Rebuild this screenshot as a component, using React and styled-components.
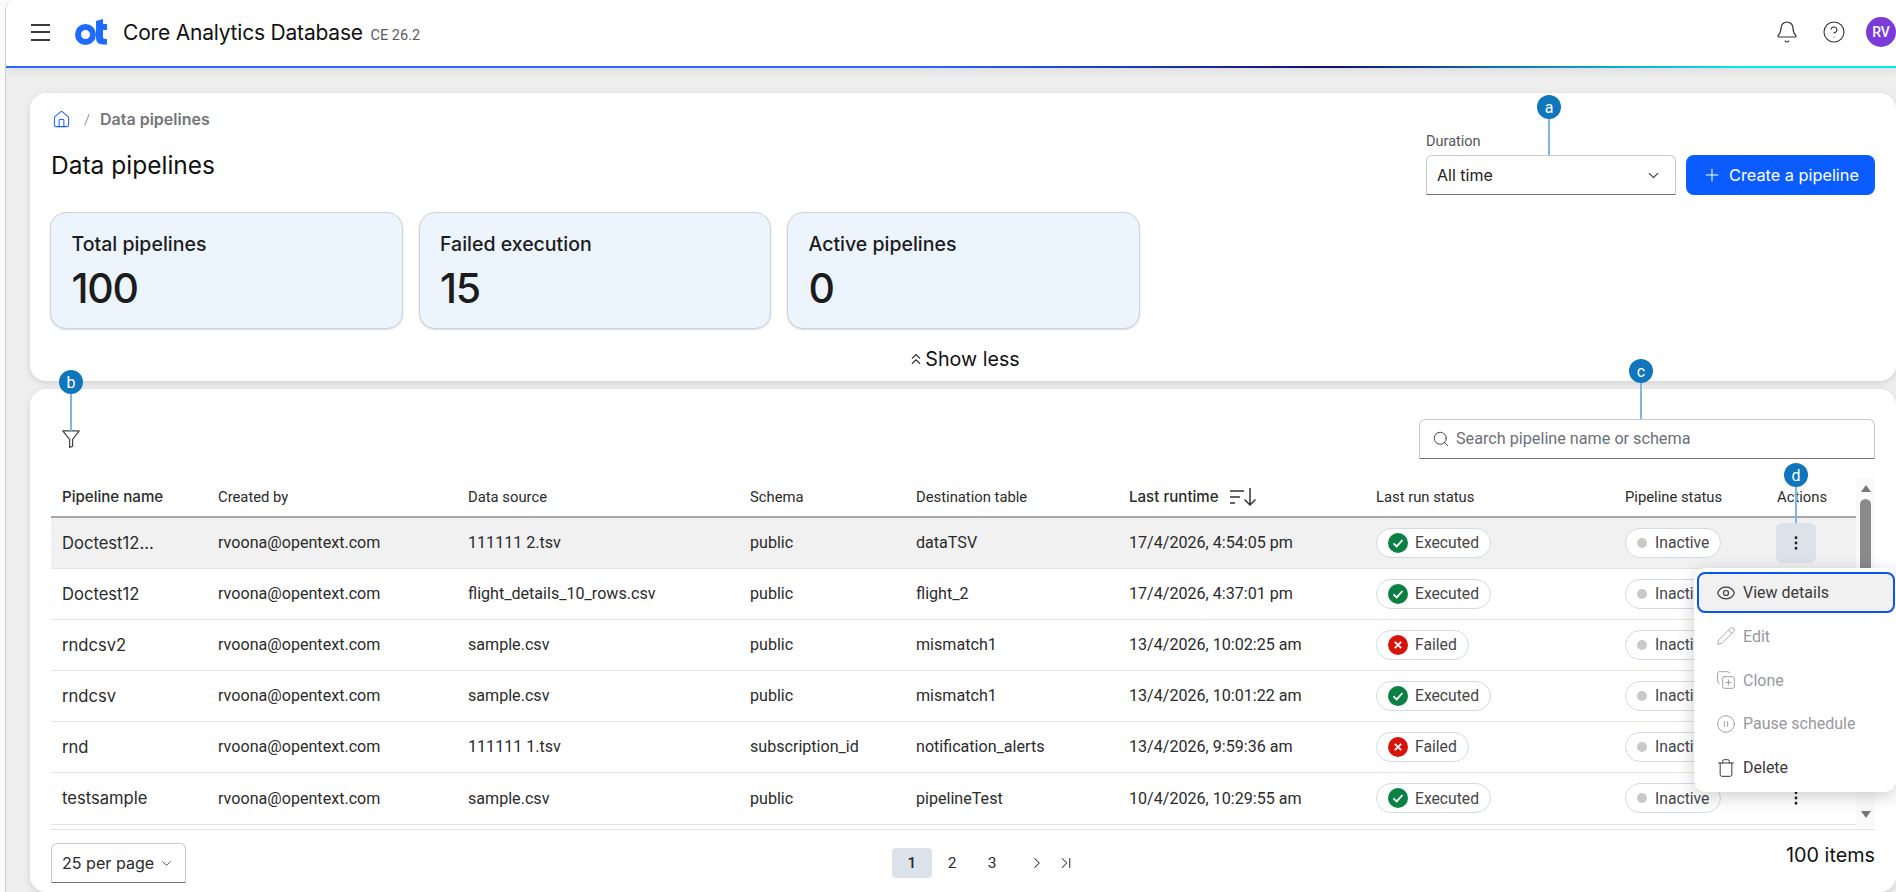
import styled, { createGlobalStyle } from 'styled-components';
import {
  Bell,
  ChevronDown,
  ChevronLast,
  ChevronRight,
  ChevronsUp,
  CircleHelp,
  CirclePause,
  CopyPlus,
  EllipsisVertical,
  Eye,
  House,
  Pencil,
  Plus,
  Search,
  Trash,
} from 'lucide-react';

const rows = [
  { name: 'Doctest12...', source: '111111 2.tsv', schema: 'public', table: 'dataTSV', time: '17/4/2026, 4:54:05 pm', ok: true },
  { name: 'Doctest12', source: 'flight_details_10_rows.csv', schema: 'public', table: 'flight_2', time: '17/4/2026, 4:37:01 pm', ok: true },
  { name: 'rndcsv2', source: 'sample.csv', schema: 'public', table: 'mismatch1', time: '13/4/2026, 10:02:25 am', ok: false },
  { name: 'rndcsv', source: 'sample.csv', schema: 'public', table: 'mismatch1', time: '13/4/2026, 10:01:22 am', ok: true },
  { name: 'rnd', source: '111111 1.tsv', schema: 'subscription_id', table: 'notification_alerts', time: '13/4/2026, 9:59:36 am', ok: false },
  { name: 'testsample', source: 'sample.csv', schema: 'public', table: 'pipelineTest', time: '10/4/2026, 10:29:55 am', ok: true },
];

const stats = [
  { label: 'Total pipelines', value: '100' },
  { label: 'Failed execution', value: '15' },
  { label: 'Active pipelines', value: '0' },
];

const Logo = () => (
  <svg width="33" height="26" viewBox="0 0 33 26" fill="none">
    <circle cx="10.5" cy="15.5" r="7.5" stroke="#1f6bff" strokeWidth="6" />
    <path d="M21 2 L28 0 V5 H32 V11 H28 V18 Q28 20 30 20 H32 V25.5 H28 Q21 25.5 21 19 Z" fill="#1f6bff" />
  </svg>
);

const FunnelIcon = () => (
  <svg width="18" height="18" viewBox="0 0 18 18" fill="none" stroke="#444" strokeWidth="1.2" strokeLinejoin="round">
    <path d="M0.8 0.8 H17.2 L10.6 9.4 V16.2 L7.6 17.4 V9.4 Z" />
  </svg>
);

const SortIcon = () => (
  <svg width="28" height="20" viewBox="0 0 28 20" fill="none" stroke="#333" strokeWidth="1.5">
    <path d="M1 4 H15 M1 10 H11 M1 16 H6" />
    <path d="M21 1 V18 M15.5 12.5 L21 18 L26.5 12.5" />
  </svg>
);

const StatusIcon = ({ ok }) => (
  <svg width="20" height="20" viewBox="0 0 20 20" fill="none">
    <circle cx="10" cy="10" r="10" fill={ok ? '#0b8043' : '#d6140b'} />
    {ok ? (
      <path d="M5.5 10.4 L8.7 13.4 L14.5 7" stroke="#fff" strokeWidth="1.8" />
    ) : (
      <path d="M6.8 6.8 L13.2 13.2 M13.2 6.8 L6.8 13.2" stroke="#fff" strokeWidth="1.8" />
    )}
  </svg>
);

const App = () => {
  return (
    <Page>
      <GlobalStyle />
      <TopBar>
        <Burger>
          <span />
          <span />
          <span />
        </Burger>
        <Logo />
        <AppTitle>
          Core Analytics Database <small>CE 26.2</small>
        </AppTitle>
        <TopActions>
          <Bell size={24} strokeWidth={1.2} color="#333" />
          <CircleHelp size={24} strokeWidth={1.1} color="#333" />
          <Avatar>RV</Avatar>
        </TopActions>
      </TopBar>

      <Main>
        <SummaryCard>
          <SummaryHead>
            <div>
              <Breadcrumb>
                <House size={19} strokeWidth={1.3} color="#1f5fff" />
                <span>/</span>
                <b>Data pipelines</b>
              </Breadcrumb>
              <PageTitle>Data pipelines</PageTitle>
            </div>
            <HeadControls>
              <Field>
                <FieldLabel>Duration</FieldLabel>
                <Select $width="250px">
                  All time
                  <ChevronDown size={17} strokeWidth={1.6} color="#333" />
                </Select>
              </Field>
              <CreateButton>
                <Plus size={20} strokeWidth={1.3} />
                Create a pipeline
              </CreateButton>
            </HeadControls>
          </SummaryHead>
          <StatRow>
            {stats.map(stat => (
              <StatCard key={stat.label}>
                <StatLabel>{stat.label}</StatLabel>
                <StatValue>{stat.value}</StatValue>
              </StatCard>
            ))}
          </StatRow>
          <ShowLess>
            <ChevronsUp size={18} strokeWidth={1.5} color="#333" />
            Show less
          </ShowLess>
        </SummaryCard>

        <TableCard>
          <Toolbar>
            <FilterButton>
              <FunnelIcon />
            </FilterButton>
            <SearchBox>
              <Search size={18} strokeWidth={1.3} color="#444" />
              Search pipeline name or schema
            </SearchBox>
          </Toolbar>

          <TableArea>
            <Table>
              <HeadRow>
                <HeadCell $strong>Pipeline name</HeadCell>
                <HeadCell>Created by</HeadCell>
                <HeadCell>Data source</HeadCell>
                <HeadCell>Schema</HeadCell>
                <HeadCell>Destination table</HeadCell>
                <HeadCell $strong>
                  Last runtime
                  <SortIcon />
                </HeadCell>
                <HeadCell>Last run status</HeadCell>
                <HeadCell>Pipeline status</HeadCell>
                <HeadCell>Actions</HeadCell>
              </HeadRow>
              {rows.map((row, i) => (
                <Row key={row.time} $active={i === 0}>
                  <div>{row.name}</div>
                  <div>rvoona@opentext.com</div>
                  <div>{row.source}</div>
                  <div>{row.schema}</div>
                  <div>{row.table}</div>
                  <div>{row.time}</div>
                  <div>
                    <Chip>
                      <StatusIcon ok={row.ok} />
                      {row.ok ? 'Executed' : 'Failed'}
                    </Chip>
                  </div>
                  <div>
                    <Chip $inactive>
                      <Dot />
                      Inactive
                    </Chip>
                  </div>
                  <div>
                    <ActionButton $active={i === 0}>
                      <EllipsisVertical size={18} strokeWidth={1.8} color="#222" />
                    </ActionButton>
                  </div>
                </Row>
              ))}
            </Table>
            <ScrollBar>
              <Arrow />
              <Thumb />
              <Arrow $down />
            </ScrollBar>
          </TableArea>

          <Footer>
            <PerPage>
              25 per page
              <ChevronDown size={15} strokeWidth={1.4} color="#333" />
            </PerPage>
            <Pager>
              <PageNum $current>1</PageNum>
              <PageNum>2</PageNum>
              <PageNum>3</PageNum>
              <PagerArrows>
                <ChevronRight size={18} strokeWidth={1.4} color="#333" />
                <ChevronLast size={18} strokeWidth={1.4} color="#333" />
              </PagerArrows>
            </Pager>
            <ItemCount>100 items</ItemCount>
          </Footer>
        </TableCard>
      </Main>

      <Pin $x={1549} $y={95} $line={36}>a</Pin>
      <Pin $x={71} $y={370} $line={37}>b</Pin>
      <Pin $x={1641} $y={359} $line={36}>c</Pin>
      <Pin $x={1796} $y={463} $line={36}>d</Pin>

      <Menu>
        <MenuItem $focus>
          <Eye size={20} strokeWidth={1.4} />
          View details
        </MenuItem>
        <MenuItem $disabled>
          <Pencil size={20} strokeWidth={1} />
          Edit
        </MenuItem>
        <MenuItem $disabled>
          <CopyPlus size={20} strokeWidth={1.1} />
          Clone
        </MenuItem>
        <MenuItem $disabled>
          <CirclePause size={20} strokeWidth={1.1} />
          Pause schedule
        </MenuItem>
        <MenuItem>
          <Trash size={20} strokeWidth={1.2} />
          Delete
        </MenuItem>
      </Menu>
    </Page>
  );
};

export default App;

const GlobalStyle = createGlobalStyle`
  html, body {
    margin: 0;
    height: 100%;
    background: #fafafa;
    overflow: hidden;
  }
  * {
    box-sizing: border-box;
  }
`;

const Page = styled.div`
  position: relative;
  width: 1891px;
  height: 892px;
  margin-left: 5px;
  background-color: #eeeeee;
  border-left: 1px solid #cfcfcf;
  border-top-left-radius: 10px;
  overflow: hidden;
  font-family: Roboto, sans-serif;
  color: #2b2b2b;
`;

const TopBar = styled.header`
  display: flex;
  align-items: center;
  height: 68px;
  padding: 0 0 2px 25px;
  background-color: #fff;
  border-bottom: 2px solid;
  border-image: linear-gradient(90deg, #2a68ff 0%, #2a68ff 48%, #0f0f70 70%, #0e8fc0 82%, #06e6f5 92%, #06e6f5 100%) 1;
  box-shadow: 0 3px 8px rgba(0, 0, 0, 0.07);
`;

const Burger = styled.div`
  display: flex;
  flex-direction: column;
  justify-content: space-between;
  width: 19px;
  height: 17px;
  margin-right: 25px;

  span {
    height: 2px;
    background-color: #3a3a3a;
  }
`;

const AppTitle = styled.div`
  margin-left: 15px;
  font-family: Inter, sans-serif;
  font-size: 21px;
  letter-spacing: -0.2px;
  color: #111;

  small {
    margin-left: 2px;
    font-family: Roboto, sans-serif;
    font-size: 14.5px;
    letter-spacing: 0;
    color: #5c5c5c;
  }
`;

const TopActions = styled.div`
  display: flex;
  align-items: center;
  gap: 23px;
  margin-left: auto;
`;

const Avatar = styled.div`
  display: flex;
  align-items: center;
  justify-content: center;
  width: 30px;
  height: 30px;
  margin-left: -3px;
  border-radius: 50%;
  background-color: #7a3bd8;
  color: #fff;
  font-size: 14px;
  font-weight: 500;
`;

const Main = styled.main`
  display: flex;
  flex-direction: column;
  gap: 8px;
  padding: 25px 0 0 24px;
`;

const Card = styled.section`
  background-color: #fff;
  border-radius: 16px;
  box-shadow: 0 2px 6px rgba(0, 0, 0, 0.12);
`;

const SummaryCard = styled(Card)`
  height: 288px;
  padding: 17px 21px 0 20px;
`;

const SummaryHead = styled.div`
  display: flex;
  justify-content: space-between;
  height: 102px;
`;

const Breadcrumb = styled.div`
  display: flex;
  align-items: center;
  height: 19px;
  padding-left: 2px;
  color: #75757a;
  font-size: 15px;

  span {
    margin: 0 10px 0 13px;
    font-weight: 300;
  }

  b {
    margin-top: -1px;
    font-weight: 600;
    font-family: Inter, sans-serif;
    font-size: 16px;
  }
`;

const PageTitle = styled.h1`
  margin: 21px 0 0 1px;
  font-family: Inter, sans-serif;
  font-size: 24.5px;
  font-weight: 400;
  line-height: 30px;
  color: #111;
`;

const HeadControls = styled.div`
  display: flex;
  align-items: flex-end;
  gap: 10px;
  padding-top: 23px;
  height: 85px;
`;

const Field = styled.div`
  display: flex;
  flex-direction: column;
  gap: 4px;
`;

const FieldLabel = styled.label`
  font-size: 14.5px;
  line-height: 18px;
  color: #55555a;
`;

const Select = styled.div`
  display: flex;
  align-items: center;
  justify-content: space-between;
  width: ${p => p.$width};
  height: 40px;
  padding: 0 13px 0 10px;
  background-color: #fff;
  border: 1px solid #c9c9c9;
  border-bottom-color: #75757a;
  border-radius: 6px 6px 0 0;
  font-family: Inter, sans-serif;
  font-size: 16px;
  color: #222;
`;

const CreateButton = styled.button`
  display: flex;
  align-items: center;
  gap: 7px;
  width: 189px;
  height: 40px;
  padding: 0 0 0 16px;
  background-color: #0a5cff;
  border: none;
  border-radius: 8px;
  color: #fff;
  font-family: Inter, sans-serif;
  font-size: 16.3px;
  font-weight: 400;
`;

const StatRow = styled.div`
  display: flex;
  gap: 16px;
`;

const StatCard = styled.div`
  display: flex;
  flex-direction: column;
  width: 352.5px;
  height: 117px;
  padding: 20px 20px 0 20.5px;
  background-color: #ecf4fe;
  border: 1px solid #ced3da;
  border-radius: 16px;
  box-shadow: 0 1px 2px rgba(0, 0, 0, 0.15);
  font-family: Inter, sans-serif;
`;

const StatLabel = styled.div`
  font-size: 19.5px;
  font-weight: 500;
  line-height: 22px;
  color: #1c1c1c;
`;

const StatValue = styled.div`
  margin-top: 9px;
  font-size: 41px;
  font-weight: 500;
  line-height: 48px;
  letter-spacing: -1.2px;
  color: #1c1c1c;
`;

const ShowLess = styled.div`
  display: flex;
  align-items: center;
  justify-content: center;
  gap: 0;
  margin-top: 18px;
  padding-left: 2px;
  font-family: Inter, sans-serif;
  font-size: 19.7px;
  line-height: 24px;
  color: #111;
`;

const TableCard = styled(Card)`
  height: 503px;
  padding: 30px 21px 0 21px;
`;

const Toolbar = styled.div`
  display: flex;
  align-items: center;
  justify-content: space-between;
  height: 40px;
`;

const FilterButton = styled.div`
  display: flex;
  padding-left: 11px;
`;

const SearchBox = styled.div`
  display: flex;
  align-items: center;
  gap: 6px;
  width: 456px;
  height: 40px;
  padding: 0 0 1px 12px;
  border: 1px solid #c9c9c9;
  border-bottom-color: #75757a;
  border-radius: 6px 6px 0 0;
  font-size: 16.2px;
  color: #6b7078;
`;

const TableArea = styled.div`
  display: flex;
  align-items: flex-start;
  height: 371px;
  border-bottom: 1px solid #e3e3e3;
`;

const Table = styled.div`
  width: 1805px;
`;

const columns = '167px 250px 282px 166px 213px 247px 249px 152px 79px';

const HeadRow = styled.div`
  display: grid;
  grid-template-columns: ${columns};
  align-items: center;
  height: 59px;
  padding-top: 18px;
  border-bottom: 2px solid #a8a8a8;
`;

const HeadCell = styled.div`
  display: flex;
  align-items: center;
  gap: 10px;
  font-family: ${p => (p.$strong ? 'Inter, sans-serif' : 'Roboto, sans-serif')};
  font-size: ${p => (p.$strong ? '15.1px' : '14.8px')};
  font-weight: ${p => (p.$strong ? 500 : 400)};
  color: #2b2b2b;

  &:first-child {
    padding-left: 11px;
  }
`;

const Row = styled.div`
  display: grid;
  grid-template-columns: ${columns};
  align-items: center;
  height: 51.1px;
  padding-bottom: 1px;
  background-color: ${p => (p.$active ? '#f1f1f1' : '#fff')};
  border-bottom: 1px solid #e3e3e3;
  font-size: 16.1px;

  & > div:first-child {
    padding-left: 11px;
    font-family: Inter, sans-serif;
    font-size: 16.6px;
  }
`;

const Chip = styled.span`
  display: inline-flex;
  align-items: center;
  gap: ${p => (p.$inactive ? '8px' : '7px')};
  height: 30px;
  padding: 0 11px;
  background-color: #fff;
  border: 1px solid #d3dae5;
  border-radius: 15px;
  font-size: 15.7px;
  color: #45454a;
`;

const Dot = styled.i`
  width: 10px;
  height: 10px;
  border-radius: 50%;
  background-color: #c9c9c9;
`;

const ActionButton = styled.div`
  display: flex;
  align-items: center;
  justify-content: center;
  width: 40px;
  height: 40px;
  margin-left: -1px;
  border-radius: 6px;
  background-color: ${p => (p.$active ? '#dce2ea' : 'transparent')};
`;

const ScrollBar = styled.div`
  display: flex;
  flex-direction: column;
  align-items: center;
  width: 19px;
  height: 350px;
  margin-top: 19px;
  padding: 7px 0 10px;
  background-color: #fafafa;
`;

const Arrow = styled.i`
  width: 0;
  height: 0;
  border-left: 5px solid transparent;
  border-right: 5px solid transparent;
  ${p => (p.$down ? 'border-top: 7px solid #777;' : 'border-bottom: 7px solid #777;')}
`;

const Thumb = styled.div`
  width: 11px;
  height: 90px;
  margin: 7px 0 auto;
  border-radius: 6px;
  background-color: #8a8a8a;
`;

const Footer = styled.div`
  display: flex;
  justify-content: space-between;
  padding-top: 13px;
`;

const PerPage = styled.div`
  display: flex;
  align-items: center;
  gap: 5px;
  width: 135px;
  height: 40px;
  padding-left: 10px;
  border: 1px solid #c9c9c9;
  border-bottom-color: #75757a;
  border-radius: 6px 6px 0 0;
  font-family: Inter, sans-serif;
  font-size: 16.1px;
`;

const Pager = styled.div`
  display: flex;
  align-items: center;
  height: 30px;
  margin: 5px 0 0 -5px;
  font-size: 15.5px;
`;

const PageNum = styled.div`
  display: flex;
  align-items: center;
  justify-content: center;
  width: 40px;
  height: 30px;
  border-radius: 4px;
  background-color: ${p => (p.$current ? '#dce2ea' : 'transparent')};
  font-weight: ${p => (p.$current ? 500 : 400)};
`;

const PagerArrows = styled.div`
  display: flex;
  gap: 11px;
  margin-left: 16px;
`;

const ItemCount = styled.div`
  margin-top: -1px;
  font-family: Inter, sans-serif;
  font-size: 19.8px;
  line-height: 26px;
  color: #111;
`;

const Pin = styled.div`
  position: absolute;
  left: ${p => p.$x - 12 - 6}px;
  top: ${p => p.$y}px;
  display: flex;
  align-items: center;
  justify-content: center;
  width: 24px;
  height: 24px;
  border-radius: 50%;
  background-color: #0f75bc;
  color: #fff;
  font-size: 16px;

  &::after {
    content: '';
    position: absolute;
    top: 24px;
    left: 11px;
    width: 2px;
    height: ${p => p.$line}px;
    background-color: #7fb5de;
  }
`;

const Menu = styled.div`
  position: absolute;
  left: 1688px;
  top: 568px;
  display: flex;
  flex-direction: column;
  gap: 2.75px;
  width: 202px;
  height: 224px;
  padding: 4px 1px 0 3px;
  background-color: #fff;
  border-radius: 12px;
  box-shadow: 0 4px 18px rgba(0, 0, 0, 0.2);
`;

const MenuItem = styled.div`
  display: flex;
  align-items: center;
  gap: 7px;
  height: 41px;
  padding-left: 17px;
  border: ${p => (p.$focus ? '2.5px solid #0a55f0' : '2.5px solid transparent')};
  border-radius: 8px;
  background-color: ${p => (p.$focus ? '#f1f1f1' : 'transparent')};
  color: ${p => (p.$disabled ? '#98989c' : '#3a3a3a')};
  font-size: 16px;
`;
